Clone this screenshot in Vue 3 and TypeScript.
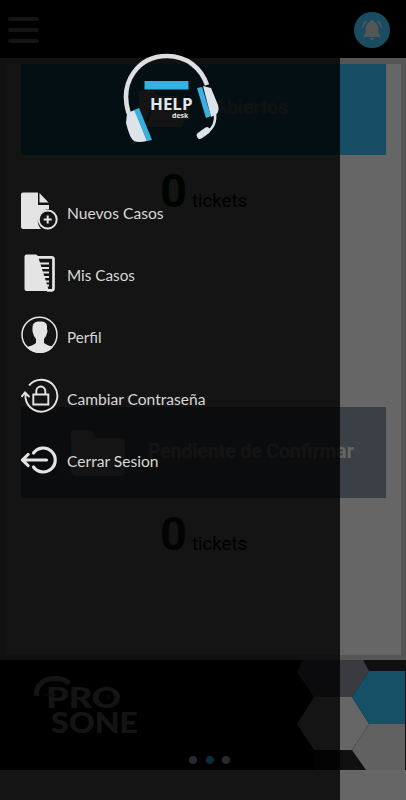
<script setup lang="ts">
interface MenuEntry {
  id: string
  label: string
  width: number
}

const entries: MenuEntry[] = [
  { id: 'new', label: 'Nuevos Casos', width: 96.5 },
  { id: 'cases', label: 'Mis Casos', width: 68 },
  { id: 'profile', label: 'Perfil', width: 34.5 },
  { id: 'password', label: 'Cambiar Contraseña', width: 138.5 },
  { id: 'logout', label: 'Cerrar Sesion', width: 91.5 },
]
</script>

<template>
  <div class="screen">
    <header class="topbar">
      <div class="burger"><i></i><i></i><i></i></div>
      <div class="bell">
        <svg width="36" height="36" viewBox="0 0 36 36">
          <path d="M18 8a2 2 0 0 1 2 2c3 1 4.500 4 4.500 7v4.500l2 2.500v1H9.500v-1l2-2.500V17c0-3 1.500-6 4.500-7a2 2 0 0 1 2-2zM16 26h4a2 2 0 0 1-4 0z" fill="#d8d8d8" />
          <path d="M8.500 16c.200-3 1.500-5 4-7M27.500 16c-.200-3-1.500-5-4-7" fill="none" stroke="#d8d8d8" stroke-width="1.500" />
        </svg>
      </div>
    </header>

    <main class="board">
      <div class="sheet">
        <section class="panel">
          <div class="band open">
            <svg class="openfolder" width="56" height="46" viewBox="0 0 56 46">
              <path d="M4 4h15l5 5h20v8H17L8 40H4zM18 20h37l-8 20H11z" fill="#fff" />
            </svg>
            <span class="band-title">Abiertos</span>
          </div>
          <div class="count"><b class="green">0</b><span>tickets</span></div>
        </section>
        <section class="panel second">
          <div class="band pending">
            <svg width="56" height="48" viewBox="0 0 56 48">
              <path d="M5 1h14q2 0 4 3l3 5h24q5 0 5 5v27q0 6-6 6H7q-6 0-6-6V6q0-5 4-5z" fill="#fff" />
            </svg>
            <span class="band-title">Pendiente de Confirmar</span>
          </div>
          <div class="count"><b>0</b><span>tickets</span></div>
        </section>
      </div>
    </main>

    <footer class="banner">
      <svg width="406" height="110" viewBox="0 0 406 110">
        <rect width="406" height="110" fill="#050505" />
        <rect x="297" width="109" height="110" fill="#282828" />
        <path d="M0 0h303l-6 12 17 25-17 27 17 26v20H0z" fill="#050505" />
        <path d="M303 0h60l6 11-17 26h-38l-17-25z" fill="#9295a0" />
        <path d="M314 37h38l17 27-17 26h-38l-17-26z" fill="#fff" />
        <path d="M369 11h36v53h-36l-17-27z" fill="#38c8ff" />
        <path d="M369 64h36v46h-39l-14-20z" fill="#f2f3f6" />
        <path d="M36.500 36c-1-12 8-17.500 19-17.500 6 0 10 1 14 5" fill="none" stroke="#fff" stroke-width="5" />
        <g class="brand">
          <text x="46" y="48" textLength="75" lengthAdjust="spacingAndGlyphs">PRO</text>
          <text x="51" y="73" textLength="87" lengthAdjust="spacingAndGlyphs">SONE</text>
        </g>
        <path d="M44 35h13" stroke="#38b0de" stroke-width="3" opacity=".6" />
        <circle cx="108.500" cy="37" r="2.500" fill="#38b0de" opacity=".6" />
      </svg>
    </footer>

    <div class="scrim"></div>
    <aside class="drawer">
      <svg class="headset" width="96" height="92" viewBox="0 0 96 92">
        <path d="M5.500 60C-4 28 16 3 44 3c20 0 34 12 40 29" fill="none" stroke="#dce0e3" stroke-width="4.600" />
        <path d="M4 60l8-3 12 31q-9 2-13 0Q7 86 3 70z" fill="#dce3e9" />
        <path d="M11 57l5-2 13 32-5 1z" fill="#38b1e2" />
        <path d="M80 33l8 2 7 17q2 7-3 10l-4 2z" fill="#dce3e9" />
        <path d="M74 35l5-1 9 29-5 2z" fill="#38b1e2" />
        <path d="M92 60c1 9-1 15-8 19" fill="none" stroke="#dce3e9" stroke-width="2.500" />
        <path d="M77 82.500l7-5" stroke="#dce3e9" stroke-width="6.500" stroke-linecap="round" />
        <path d="M21.500 28h44v8.500h-44z" fill="#38b1e2" />
        <text class="help" x="27" y="57" textLength="42.500" lengthAdjust="spacingAndGlyphs">HELP</text>
        <text class="desk" x="49" y="65" textLength="16.500" lengthAdjust="spacingAndGlyphs">desk</text>
      </svg>
      <nav>
        <a v-for="item in entries" :key="item.id" class="entry">
          <svg class="icon" width="38" height="40" viewBox="0 0 38 40">
            <template v-if="item.id === 'new'">
              <path d="M2 .500h15v12.500h11v4a12 12 0 0 0-8 20H2q-2 0-2-2V2.500q0-2 2-2zM18.500 1l9 9.500h-9z" fill="#e4e4e4" />
              <circle cx="26.700" cy="27.500" r="9" fill="none" stroke="#e4e4e4" stroke-width="2" />
              <path d="M26.700 23.500v8M22.700 27.500h8" stroke="#e4e4e4" stroke-width="2" />
            </template>
            <template v-else-if="item.id === 'cases'">
              <path d="M5.500 .500h9q2 0 2.500 2l11 34.500H5.500q-2 0-2-2V2.500q0-2 2-2z" fill="#e4e4e4" />
              <path d="M16 3.300h14.500q2 0 2 2v29q0 2-2 2H26" fill="none" stroke="#e4e4e4" stroke-width="2.700" />
              <path d="M18 9.500h10M19 14h9M21 18.500h7M22 23h6M24 27.500h4M25 31.500h3" stroke="#e4e4e4" stroke-width="2.200" />
            </template>
            <template v-else-if="item.id === 'profile'">
              <circle cx="18.500" cy="18.700" r="17.500" fill="none" stroke="#e4e4e4" stroke-width="1.500" />
              <path d="M11.500 12c0-5 2.500-6.500 7.500-6.500s7.500 1.500 7 7l.500 3-1.500 4.500-2 3v4c2 2 7 3 9 4-3 4-8 6-13 6s-10-2-13-6c3-1 7-2 9-4v-4l-2-3-1.500-4.500z" fill="#e4e4e4" />
            </template>
            <template v-else-if="item.id === 'password'">
              <path d="M8 7.500A16 16 0 1 1 4.500 20v-4M.500 19l3.500-4.500L8.500 19" fill="none" stroke="#e4e4e4" stroke-width="1.900" />
              <path d="M12.300 16.500h15v10h-15zM15.300 16v-3a4.500 4.500 0 0 1 9 0v3" fill="none" stroke="#e4e4e4" stroke-width="1.900" />
            </template>
            <template v-else>
              <path d="M12.500 13A12 12 0 1 1 12.500 27" fill="none" stroke="#e4e4e4" stroke-width="3.200" stroke-linecap="round" />
              <path d="M25.500 20H2M7 14.500L1.600 20 7 25.500" fill="none" stroke="#e4e4e4" stroke-width="3.200" stroke-linecap="round" />
            </template>
          </svg>
          <svg class="label" width="150" height="24" viewBox="0 0 150 24">
            <text x="0" y="17.500" :textLength="item.width" lengthAdjust="spacingAndGlyphs">{{ item.label }}</text>
          </svg>
        </a>
      </nav>
    </aside>
    <div class="dots"><i></i><i class="on"></i><i></i></div>
  </div>
</template>

<style>
body { background: #666; overflow: hidden; }
</style>

<style scoped>
.screen { position: relative; width: 406px; height: 800px; overflow: hidden; background: #fff; font-family: Roboto, sans-serif; }
.topbar { height: 58px; box-sizing: border-box; background: #000; display: flex; justify-content: space-between; align-items: flex-start; padding: 12px 16px 0 8px; }
.burger { display: flex; flex-direction: column; gap: 7.4px; padding-top: 5px; }
.burger i { width: 31px; height: 3.800px; border-radius: 2px; background: #fff; }
.bell { width: 36px; height: 36px; border-radius: 50%; background: #3fbdf0; }
.bell svg { display: block; }
.board { height: 602px; box-sizing: border-box; padding: 6px 5px 5px; background: #d4d4d4; }
.sheet { height: 591px; background: #fff; padding: 0 15px 0 16px; }
.panel { height: 343px; }
.band { height: 91px; box-sizing: border-box; display: flex; align-items: center; }
.open { background: #3bc4fc; padding-left: 114px; gap: 23px; }
.open .openfolder { flex: none; }
.pending { background: #949eb0; padding-left: 49px; gap: 22px; }
.pending svg { flex: none; }
.band-title { color: #fff; font-size: 19.300px; font-weight: 700; white-space: nowrap; padding-bottom: 3px; }
.open .band-title { color: #d4d4d4; padding-bottom: 4px; }
.count { display: flex; align-items: baseline; padding: 8px 0 0 139px; gap: 5px; color: #000; line-height: 56px; }
.count b { font-size: 47px; color: #3c3c3c; }
.count .green { color: #063c0a; }
.count span { font-size: 18.600px; }
.banner svg { display: block; }
.brand text { font-family: Lato, sans-serif; font-weight: 900; font-size: 29px; fill: #fff; }
.scrim { position: absolute; inset: 0; background: rgba(0, 0, 0, 0.6); }
.drawer { position: absolute; left: 0; top: 0; width: 340px; height: 800px; box-sizing: border-box; padding-top: 53px; background: rgba(0, 0, 0, 0.8); }
.headset { display: block; margin-left: 123px; }
.help { font-family: "Open Sans", sans-serif; font-size: 16.500px; font-weight: 700; fill: #e2e7ec; }
.desk { font-family: "Open Sans", sans-serif; font-size: 7.500px; font-weight: 700; fill: #e2e7ec; }
nav { padding: 46px 0 0 20.500px; }
.entry { display: flex; height: 62px; }
.icon { flex: none; padding-top: 1px; }
.label { margin: 10px 0 0 8.500px; overflow: visible; }
.label text { font-family: Lato, sans-serif; font-size: 14.800px; fill: #d8d8d8; }
.dots { position: absolute; left: 189px; top: 756px; display: flex; gap: 8.500px; }
.dots i { width: 8px; height: 8px; border-radius: 50%; background: #292929; }
.dots .on { background: #0a2c3a; }
</style>
